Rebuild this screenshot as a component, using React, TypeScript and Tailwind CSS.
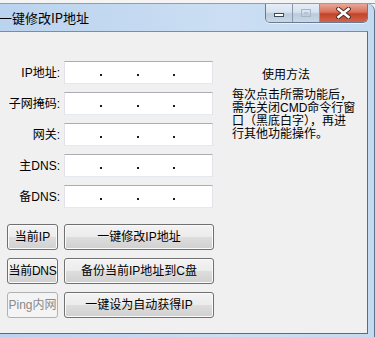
import React from 'react'
import clsx from 'clsx'

const FONT = { fontFamily: '"Liberation Sans", "Noto Sans CJK SC", sans-serif' }

const FIELDS = ['IP地址:', '子网掩码:', '网关:', '主DNS:', '备DNS:']

const BTN_BG =
  'bg-[linear-gradient(to_bottom,#f3f3f3_0%,#ececec_48%,#dddddd_52%,#d0d0d0_100%)]'

function IpBox() {
  return (
    <div className="w-[149px] h-[23px] bg-white border border-[#e2e3ea] border-t-[#abadb3] border-b-[#e3e9ef] grid grid-cols-4">
      {[0, 1, 2].map((i) => (
        <div key={i} className="flex justify-end items-center pt-[4px]">
          <span className="w-[2px] h-[2px] bg-[#1a1a1a]" />
        </div>
      ))}
      <div />
    </div>
  )
}

function Btn({ children, className, disabled }: { children: React.ReactNode; className?: string; disabled?: boolean }) {
  return (
    <button
      className={clsx(
        'h-[26px] rounded-[3px] border text-[12px] leading-none flex items-center justify-center',
        disabled
          ? 'border-[#adb2b5] bg-[#f4f4f4] text-[#8a8a8a]'
          : clsx('border-[#707070] text-black shadow-[inset_0_0_0_1px_#fbfbfb]', BTN_BG),
        className
      )}
    >
      {children}
    </button>
  )
}

function CaptionButtons() {
  return (
    <div className="flex h-[19px] mr-[6px] rounded-b-[5px] border border-t-0 border-[#6a7a90] overflow-hidden shadow-[0_1px_0_#e8f0f9]">
      {/* 최소화 */}
      <div className="w-[27px] h-full flex items-end justify-center pb-[5px] bg-[linear-gradient(to_bottom,#e6eef7_0%,#d6e2ef_45%,#bccbdc_55%,#c9d7e6_100%)] border-r border-[#8898ad]">
        <span className="w-[10px] h-[4px] bg-white border border-[#3b4a5e]" />
      </div>
      {/* 최대화 (비활성) */}
      <div className="w-[27px] h-full flex items-center justify-center bg-[linear-gradient(to_bottom,#e6eef7_0%,#d6e2ef_45%,#bccbdc_55%,#c9d7e6_100%)] border-r border-[#8898ad]">
        <span className="w-[10px] h-[8px] border border-[#a8b5c4] flex items-center justify-center">
          <span className="w-[4px] h-[2px] border border-[#b8c3d0]" />
        </span>
      </div>
      {/* 닫기 */}
      <div className="w-[47px] h-full flex items-center justify-center bg-[linear-gradient(to_bottom,#e8a897_0%,#d9705a_45%,#c3432b_55%,#d2654c_100%)]">
        <svg width="15" height="12" viewBox="0 0 15 12">
          <path d="M2.5 2 L12.5 10 M12.5 2 L2.5 10" stroke="#4a2a24" strokeWidth="4.4" strokeLinecap="square" />
          <path d="M2.5 2 L12.5 10 M12.5 2 L2.5 10" stroke="#ffffff" strokeWidth="2.6" strokeLinecap="square" />
        </svg>
      </div>
    </div>
  )
}

export default function App() {
  return (
    <div className="w-[375px] h-[337px] overflow-hidden flex flex-col bg-[#f2f2f2]" style={FONT}>
      {/* 뒤쪽 창 */}
      <div className="h-[4px] bg-[#f4f4f4] border-b border-[#9c9c9c] shrink-0" />

      <div className="flex-1 flex flex-col rounded-tr-[7px] border-r border-[#5f738c] bg-[linear-gradient(to_right,#bad3ee,#cbdef3_60%,#c4daf1)]">
        {/* 타이틀 바 */}
        <div className="h-[27px] shrink-0 flex items-start justify-between">
          <div className="ml-[-1px] pt-[7px] text-[13px] text-black leading-none" style={{ fontFamily: '"Noto Sans CJK SC", sans-serif' }}>
            一键修改IP地址
          </div>
          <CaptionButtons />
        </div>

        {/* 클라이언트 영역 */}
        <div className="flex-1 mr-[6px] mb-[3px] bg-[#f0f0f0] border-t border-r border-b border-[#7b8da3] border-r-[#5b6b7e] border-b-[#5b6b7e] flex">
          <div className="w-[220px] flex flex-col">
            <div className="flex flex-col gap-[8px] pt-[29px]">
              {FIELDS.map((f) => (
                <div key={f} className="flex items-center gap-[4px]">
                  <div className="w-[60px] text-right text-[12px] text-black leading-none pt-[1px]">{f}</div>
                  <IpBox />
                </div>
              ))}
            </div>

            <div className="flex flex-col gap-[8px] pt-[16px] pl-[7px]">
              <div className="flex gap-[6px]">
                <Btn className="w-[51px]">当前IP</Btn>
                <Btn className="w-[150px]">一键修改IP地址</Btn>
              </div>
              <div className="flex gap-[6px]">
                <Btn className="w-[51px] tracking-[-0.3px]">当前DNS</Btn>
                <Btn className="w-[150px]">备份当前IP地址到C盘</Btn>
              </div>
              <div className="flex gap-[6px]">
                <Btn className="w-[51px]" disabled>Ping内网</Btn>
                <Btn className="w-[150px]">一键设为自动获得IP</Btn>
              </div>
            </div>
          </div>

          <div className="flex-1 pl-[12px] pt-[37px] text-[12px] text-black">
            <div className="ml-[30px] leading-none">使用方法</div>
            <p className="mt-[8px] leading-[13px] whitespace-nowrap">
              每次点击所需功能后，<br />
              需先关闭CMD命令行窗<br />
              口（黑底白字），再进<br />
              行其他功能操作。
            </p>
          </div>
        </div>
      </div>
    </div>
  )
}
